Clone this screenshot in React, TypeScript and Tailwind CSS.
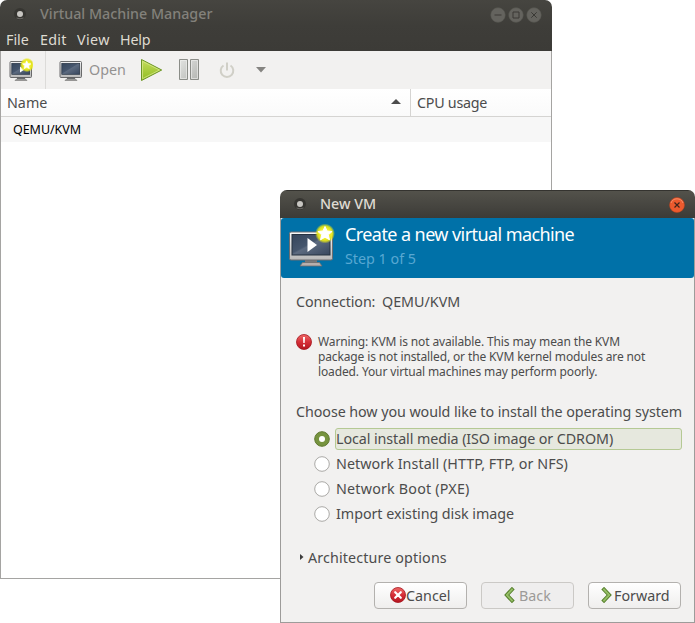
import type { ReactNode } from "react";

function SvgDefs() {
  return (
    <svg className="absolute size-0" aria-hidden="true">
      <defs>
        <linearGradient id="screen" x1="0" y1="0" x2="1" y2="1">
          <stop offset="0" stopColor="#35455b" />
          <stop offset="0.45" stopColor="#46566d" />
          <stop offset="0.5" stopColor="#5d6b80" />
          <stop offset="1" stopColor="#37465d" />
        </linearGradient>
        <linearGradient id="frame" x1="0" y1="0" x2="0" y2="1">
          <stop offset="0" stopColor="#fafafa" />
          <stop offset="1" stopColor="#b8b8b8" />
        </linearGradient>
        <radialGradient id="glow">
          <stop offset="0.5" stopColor="#f2f02d" />
          <stop offset="0.75" stopColor="#e6e616" stopOpacity="0.9" />
          <stop offset="1" stopColor="#e6e616" stopOpacity="0" />
        </radialGradient>
        <linearGradient id="play" x1="0" y1="0" x2="0" y2="1">
          <stop offset="0" stopColor="#c5dc5c" />
          <stop offset="1" stopColor="#8fbd22" />
        </linearGradient>
        <linearGradient id="pause" x1="0" y1="0" x2="1" y2="1">
          <stop offset="0" stopColor="#e2e3e1" />
          <stop offset="1" stopColor="#b4b6b2" />
        </linearGradient>
        <linearGradient id="red" x1="0" y1="0" x2="0" y2="1">
          <stop offset="0" stopColor="#ef6a68" />
          <stop offset="0.5" stopColor="#d62f38" />
          <stop offset="1" stopColor="#b3151f" />
        </linearGradient>
      </defs>
    </svg>
  );
}

const STAR = "M38 4.500l2.100 4.500 5 .5-3.800 3.300 1.200 5-4.500-2.600-4.500 2.600 1.200-5-3.800-3.300 5-.5z";

function LargeMonitor() {
  return (
    <svg viewBox="0 0 48 48" className="size-12 shrink-0" aria-hidden="true">
      <path d="M18 37h12v5H18z" fill="#77787b" />
      <path d="M15.500 40.500h17l2.500 3.500H13z" fill="#b7afad" stroke="#6c6c6c" strokeWidth="0.800" />
      <rect x="2.500" y="10" width="43" height="28" rx="1.500" fill="url(#frame)" stroke="#6c6d70" />
      <rect x="5" y="12.500" width="38" height="20.500" fill="url(#screen)" stroke="#263241" />
      <path d="M20.500 16v14l9.500-7z" fill="#fff" />
      <circle cx="38" cy="11.500" r="10" fill="url(#glow)" />
      <path d={STAR} fill="#fff" stroke="#fff" strokeLinejoin="round" />
    </svg>
  );
}

function SmallMonitor({ star = false }: { star?: boolean }) {
  return (
    <svg viewBox="0 0 24 24" className="size-6 shrink-0" aria-hidden="true">
      <path d="M8 18.500h8v3H8z" fill="#66686b" />
      <path d="M7.500 21h9l1.500 1.500H6z" fill="#a8a8a6" stroke="#70706e" strokeWidth="0.600" />
      <rect x="1" y="3.500" width="21.500" height="16" rx="1" fill="url(#frame)" stroke="#5b5c5e" strokeWidth="0.900" />
      <rect x="2.800" y="5.300" width="17.900" height="11" fill="url(#screen)" stroke="#263241" strokeWidth="0.700" />
      {star && (
        <>
          <path d="M11 8.500v6l4.500-3z" fill="#fff" />
          <circle cx="18" cy="7" r="7.200" fill="url(#glow)" />
          <path d={STAR} transform="translate(-5.100 .1) scale(.6)" fill="#fff" stroke="#fff" strokeLinejoin="round" />
        </>
      )}
    </svg>
  );
}

function AppGlyph() {
  return (
    <svg viewBox="0 0 16 16" className="size-4 shrink-0" aria-hidden="true">
      <circle cx="8" cy="8" r="6" fill="#363531" />
      <path d="M4.500 12q3.500 1.600 7 0" fill="none" stroke="#6c6a66" />
      <circle cx="8" cy="8" r="3" fill="#c8c6c2" />
    </svg>
  );
}

function WindowButton({ children }: { children: ReactNode }) {
  return (
    <svg viewBox="0 0 16 16" className="size-4" fill="none" stroke="#3a3935" aria-hidden="true">
      <circle cx="8" cy="8" r="7.400" fill="#64635e" stroke="#4f4e49" strokeWidth="0.500" />
      {children}
    </svg>
  );
}

function ManagerWindow() {
  return (
    <section className="absolute top-0 left-0 flex h-[579px] w-[552px] flex-col overflow-hidden rounded-t-[7px] bg-white">
      <header className="flex h-[51px] shrink-0 flex-col bg-linear-to-b from-[#464540] via-[#3e3d39] to-[#3c3b37]">
        <div className="flex h-7 items-center pr-[10.500px] pl-3 text-[#83817b]">
          <AppGlyph />
          <h1 className="ml-3 font-medium">Virtual Machine Manager</h1>
          <div className="mt-px ml-auto flex gap-0.5">
            <WindowButton><path d="M4.500 8h7" /></WindowButton>
            <WindowButton><path d="M5 5h6v6H5z" /></WindowButton>
            <WindowButton><path d="M5.300 5.300l5.400 5.400M10.700 5.300l-5.400 5.400" /></WindowButton>
          </div>
        </div>
        <nav className="flex h-[23px] items-center pl-[6px] text-[#dfdbd2]">
          <span className="w-[34px]">File</span>
          <span className="w-[37px] tracking-[0.300px]">Edit</span>
          <span className="w-[43px] tracking-[0.400px]">View</span>
          <span className="tracking-[-0.200px]">Help</span>
        </nav>
      </header>
      <div className="flex grow flex-col border border-t-0 border-[#a5a4a2]">
        <div className="flex h-[38px] shrink-0 items-center bg-[#f2f1f0] pl-2">
          <SmallMonitor star />
          <div className="ml-[12px] h-full w-px bg-[#dcdbd9]" />
          <div className="ml-[13px]"><SmallMonitor /></div>
          <span className="ml-[6px] text-[#949290]">Open</span>
          <svg viewBox="0 0 24 24" className="ml-[13px] size-6" aria-hidden="true">
            <path d="M2.500 1.500v21L22.700 12z" fill="url(#play)" stroke="#6c9526" strokeLinejoin="round" />
            <path d="M3.500 3.300v17.400L20.500 12z" fill="none" stroke="#dbea92" strokeWidth="0.700" />
          </svg>
          <svg viewBox="0 0 24 24" className="ml-[14px] size-6" aria-hidden="true">
            <g fill="url(#pause)" stroke="#8b8d88">
              <path d="M2.500 1.500h8v20h-8zM13.500 1.500h8v20h-8z" />
            </g>
            <path d="M3.500 2.500h6v18h-6zM14.500 2.500h6v18h-6z" fill="none" stroke="#f2f2f0" strokeWidth="0.600" />
          </svg>
          <svg viewBox="0 0 24 24" className="ml-[14px] size-6" fill="none" stroke="#d0cfc7" strokeWidth="2" aria-hidden="true">
            <path d="M8.500 7.500a6.300 6.300 0 1 0 7 0M12 4.500v8" />
          </svg>
          <svg viewBox="0 0 10 6" className="ml-[17px] h-[6px] w-[10px]" aria-hidden="true"><path d="M0 0h10L5 5.500z" fill="#858481" /></svg>
        </div>
        <div className="flex h-[28px] shrink-0 items-center border-b border-[#d5d4d2] bg-linear-to-b from-white to-[#fafafa] text-[#4c4c4c]">
          <div className="flex h-full w-[410px] items-center justify-between border-r border-[#d5d4d2] pr-[9px] pl-[6px]">
            <span>Name</span>
            <svg viewBox="0 0 10 5" className="mb-0.5 h-[5px] w-[10px]" aria-hidden="true"><path d="M0 5h10L5 0z" fill="#4c4c4c" /></svg>
          </div>
          <span className="pl-[6px] tracking-[-0.250px]">CPU usage</span>
        </div>
        <div className="flex h-[25px] items-center bg-[#f7f7f7] pl-3 text-[12.500px] tracking-[-0.050px] text-black">QEMU/KVM</div>
      </div>
    </section>
  );
}

function RadioRow({ label, className = "", selected = false }: { label: string; className?: string; selected?: boolean }) {
  return (
    <label className="flex h-[25px] items-center">
      <svg viewBox="0 0 16 16" className="size-4 shrink-0" aria-hidden="true">
        <circle cx="8" cy="8" r="7.300" fill={selected ? "#76933f" : "#fff"} stroke={selected ? "#5f782f" : "#aaa9a6"} />
        {selected && <circle cx="8" cy="8" r="3" fill="#fff" />}
      </svg>
      <span className={`ml-[5px] flex h-[22px] grow items-center rounded-[3px] border ${selected ? "border-[#b5c994] bg-[#e6e8de]" : "border-transparent"} ${className}`}>{label}</span>
    </label>
  );
}

const BUTTON = "flex h-[27px] w-[93px] items-center rounded-[4px] border";

function Chevron({ flip = false }: { flip?: boolean }) {
  return (
    <svg viewBox="0 0 12 16" className={`mb-0.5 h-4 w-3 ${flip ? "-scale-x-100" : ""}`} fill="none" aria-hidden="true">
      <path d="M9 2.500L3.800 8 9 13.500" stroke="#4f7a25" strokeWidth="3.800" strokeLinecap="square" />
      <path d="M9 2.500L3.800 8 9 13.500" stroke="#94bd65" strokeWidth="2" strokeLinecap="square" />
    </svg>
  );
}

function NewVmDialog() {
  return (
    <section className="absolute top-[190px] left-[280px] flex h-[433px] w-[415px] flex-col overflow-hidden rounded-t-[7px] bg-[#f2f1f0]">
      <header className="flex h-7 shrink-0 items-center border-t border-[#34332f] bg-linear-to-b from-[#53524b] to-[#3c3b37] pr-[10.500px] pb-px pl-3 text-[#dfdbd2]">
        <AppGlyph />
        <h2 className="ml-3 font-medium">New VM</h2>
        <svg viewBox="0 0 16 16" className="mt-px ml-auto size-4" aria-hidden="true">
          <circle cx="8" cy="8" r="7.500" fill="#ec5a2e" stroke="#b9431f" strokeWidth="0.500" />
          <path d="M2 6a6.400 6.400 0 0 1 12 0" fill="none" stroke="#f68f6a" />
          <path d="M5.500 5.500l5 5M10.500 5.500l-5 5" stroke="#41241a" strokeWidth="1.200" />
        </svg>
      </header>
      <div className="flex grow flex-col border border-t-0 border-[#9d9c9a]">
        <div className="flex h-[60px] shrink-0 items-start rounded-[3px] bg-[#0071a8] pt-[4px] pl-[6px]">
          <LargeMonitor />
          <div className="ml-[10px]">
            <p className="h-[25px] text-[18px] leading-6 tracking-[-0.580px] text-white">Create a new virtual machine</p>
            <p className="h-6 leading-6 text-[#58a8d2]">Step 1 of 5</p>
          </div>
        </div>
        <div className="flex flex-col pr-3 pl-[15px] text-[#4c4c4c]">
          <p className="mt-[12px] flex h-6 items-center">
            <span className="w-[86px] tracking-[-0.100px]">Connection:</span>
            <span>QEMU/KVM</span>
          </p>
          <div className="mt-[20px] flex h-[45px] text-[12px] leading-[15px]">
            <svg viewBox="0 0 16 16" className="mr-[6px] size-4 shrink-0" aria-hidden="true">
              <circle cx="8" cy="8" r="7.500" fill="url(#red)" stroke="#a5141d" strokeWidth="0.800" />
              <path d="M7 3h2l-.3 6H7.300zM7 10.500h2v2H7z" fill="#fff" />
            </svg>
            <p className="tracking-[-0.130px] whitespace-nowrap">
              Warning: KVM is not available. This may mean the KVM<br />
              package is not installed, or the KVM kernel modules are not<br />
              loaded. Your virtual machines may perform poorly.
            </p>
          </div>
          <p className="mt-[21px] flex h-6 items-center tracking-[-0.070px] whitespace-nowrap">Choose how you would like to install the operating system</p>
          <div className="mt-[2px] flex flex-col pl-[18px]">
            <RadioRow selected label="Local install media (ISO image or CDROM)" className="tracking-[-0.080px]" />
            <RadioRow label="Network Install (HTTP, FTP, or NFS)" className="tracking-[0.060px]" />
            <RadioRow label="Network Boot (PXE)" className="tracking-[0.200px]" />
            <RadioRow label="Import existing disk image" className="tracking-[-0.040px]" />
          </div>
          <div className="mt-[20px] flex h-6 items-center pl-[3px]">
            <svg viewBox="0 0 5 6" className="mr-[4px] mb-0.5 h-[6px] w-[5px]" aria-hidden="true"><path d="M1 0v6l3.500-3z" fill="#3c3c3c" /></svg>
            <span className="tracking-[0.130px]">Architecture options</span>
          </div>
          <div className="mt-[12px] flex justify-end gap-[14px] pr-px">
            <button type="button" className={`${BUTTON} border-[#b3b1ae] bg-linear-to-b from-white to-[#efeeed] pl-[15px]`}>
              <svg viewBox="0 0 16 16" className="mb-px size-4 shrink-0" aria-hidden="true">
                <circle cx="8" cy="8" r="7.500" fill="url(#red)" stroke="#a5141d" strokeWidth="0.800" />
                <path d="M5.200 5.200l5.600 5.600M10.800 5.200l-5.600 5.600" stroke="#fff" strokeWidth="2.200" strokeLinecap="round" />
              </svg>
              Cancel
            </button>
            <button type="button" className={`${BUTTON} border-[#cbc9c6] bg-[#efeeee] pl-[21px] text-[#9c9a98]`}>
              <Chevron /><span className="ml-[4px]">Back</span>
            </button>
            <button type="button" className={`${BUTTON} border-[#b3b1ae] bg-linear-to-b from-white to-[#efeeed] pl-[12px]`}>
              <Chevron flip /><span className="ml-px">Forward</span>
            </button>
          </div>
        </div>
      </div>
    </section>
  );
}

export default function App() {
  return (
    <main className="relative h-[623px] w-[695px] overflow-hidden bg-white font-['Noto_Sans',sans-serif] text-[14.300px] leading-5">
      <SvgDefs />
      <ManagerWindow />
      <NewVmDialog />
    </main>
  );
}
